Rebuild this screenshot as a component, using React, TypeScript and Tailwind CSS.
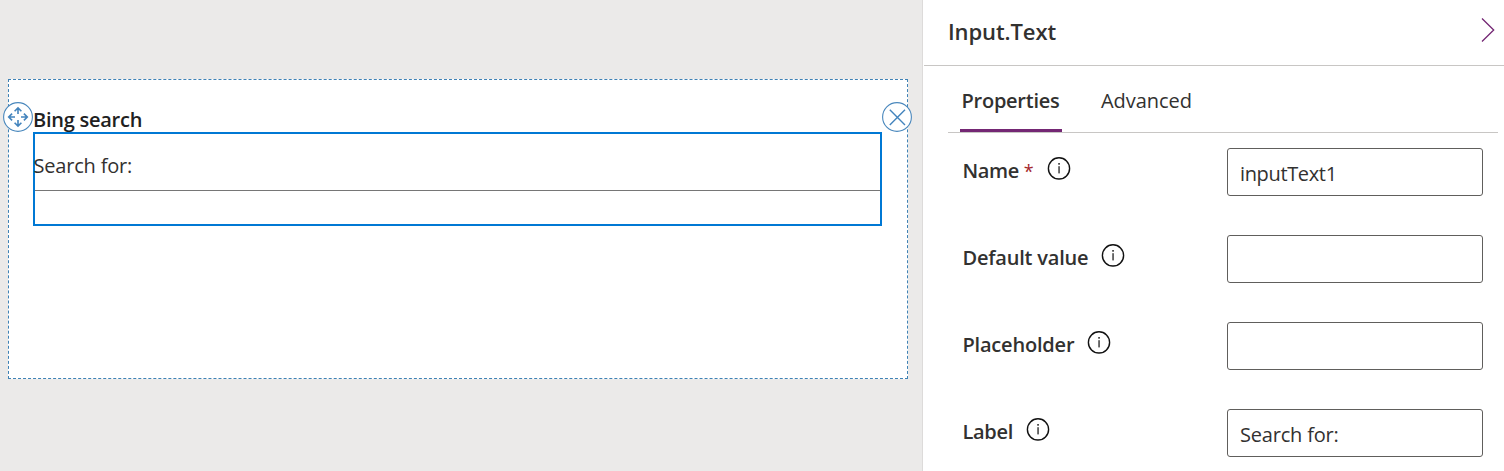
import React from "react";

function InfoIcon() {
  return (
    <svg width="24" height="24" viewBox="0 0 24 24" fill="none" className="block shrink-0">
      <circle cx="12" cy="12.4" r="10.6" stroke="#111111" strokeWidth="1.4" />
      <rect x="11.3" y="7" width="1.5" height="1.7" fill="#222222" />
      <rect x="11.4" y="10.2" width="1.3" height="7.2" fill="#222222" />
    </svg>
  );
}

function MoveHandle() {
  return (
    <svg width="30" height="30" viewBox="0 0 30 30" fill="none" className="absolute top-[22px] -left-[6px]">
      <circle cx="15" cy="15" r="14.4" fill="#ffffff" stroke="#4a88bd" strokeWidth="1.1" />
      <g stroke="#4384bd" strokeWidth="1.6">
        <path d="M15 12V6.6M11.6 9.3L15 5.9L18.4 9.3" />
        <path d="M15 18V23.4M11.6 20.7L15 24.1L18.4 20.7" />
        <path d="M12 15H6.4M9.1 11.6L5.7 15L9.1 18.4" />
        <path d="M18 15H23.6M20.9 11.6L24.3 15L20.9 18.4" />
      </g>
    </svg>
  );
}

function RemoveHandle() {
  return (
    <svg width="30" height="30" viewBox="0 0 30 30" fill="none" className="absolute top-[22px] -right-[5px]">
      <circle cx="15" cy="15" r="14.4" fill="#ffffff" stroke="#4a88bd" strokeWidth="1.1" />
      <path d="M7.8 7.8L23 23M23 7.8L7.8 23" stroke="#4384bd" strokeWidth="1.4" />
    </svg>
  );
}

type FieldProps = {
  label: string;
  labelClass: string;
  value?: string;
  valueClass?: string;
  required?: boolean;
};

function Field({ label, labelClass, value = "", valueClass = "", required = false }: FieldProps) {
  return (
    <div className="flex h-12 shrink-0 items-start justify-between">
      <div className="flex items-start pt-2">
        <div className={`flex h-7 whitespace-nowrap pl-[0.5px] leading-[30px] font-semibold ${labelClass}`}>
          {label}
          {required && <span className="ml-[5px] text-[18px] font-normal tracking-normal text-[#a4262c]">*</span>}
        </div>
        <InfoIcon />
      </div>
      <div className={`h-12 w-64 rounded-[3px] border border-[#605e5c] px-3 leading-[49px] whitespace-nowrap ${valueClass}`}>
        {value}
      </div>
    </div>
  );
}

export default function App() {
  return (
    <div className="flex h-[471px] w-[1504px] overflow-hidden bg-white font-['Open_Sans',sans-serif] text-[20px] text-[#323130]">
      <main className="h-full w-[923px] shrink-0 border-r border-[#dddbda] bg-[#ebeae9] pt-[79px] pl-2">
        <section className="relative h-[300px] w-[900px] border border-dashed border-[#3f82b5] bg-white pt-[25px] pl-6">
          <h2 className="h-[27px] whitespace-nowrap leading-[29px] font-semibold tracking-[-0.25px] text-[#212121]">Bing search</h2>
          <div className="h-[94px] w-[849px] border-2 border-[#0078d4]">
            <div className="h-[57px] border-b border-[#767676]">
              <span className="-ml-[1.5px] block whitespace-nowrap leading-[64px] tracking-[-0.2px]">Search for:</span>
            </div>
          </div>
          <MoveHandle />
          <RemoveHandle />
        </section>
      </main>
      <aside className="flex min-w-0 flex-1 flex-col">
        <header className="ml-px flex h-[66px] shrink-0 items-start justify-between border-b border-[#c8c6c4] pr-2 pl-6">
          <h1 className="whitespace-nowrap text-[22px] leading-[63px] font-semibold tracking-[-0.1px]">Input.Text</h1>
          <svg width="16" height="26" viewBox="0 0 16 26" fill="none" className="mt-[17px]">
            <path d="M2 1.5L13.7 13L2 24.5" stroke="#742774" strokeWidth="1.3" />
          </svg>
        </header>
        <nav className="mr-[6px] ml-[25px] flex h-[67px] shrink-0 border-b border-[#c8c6c4] pl-3">
          <div className="h-[66px] w-[102px] border-b-[3px] border-[#742774] pl-[1.5px] leading-[69px] font-semibold tracking-[-0.25px] whitespace-nowrap">Properties</div>
          <div className="ml-[39px] leading-[69px] tracking-[-0.05px] whitespace-nowrap">Advanced</div>
        </nav>
        <div className="mt-[15px] flex flex-col gap-[39px] pr-[21px] pl-[39px]">
          <Field label="Name" labelClass="w-[85px] tracking-[-0.4px]" required value="inputText1" valueClass="tracking-[-0.35px]" />
          <Field label="Default value" labelClass="w-[139px] tracking-[-0.2px]" />
          <Field label="Placeholder" labelClass="w-[125px] tracking-[-0.2px]" />
          <Field label="Label" labelClass="w-[64px] tracking-[-0.3px]" value="Search for:" valueClass="tracking-[-0.2px]" />
        </div>
      </aside>
    </div>
  );
}
